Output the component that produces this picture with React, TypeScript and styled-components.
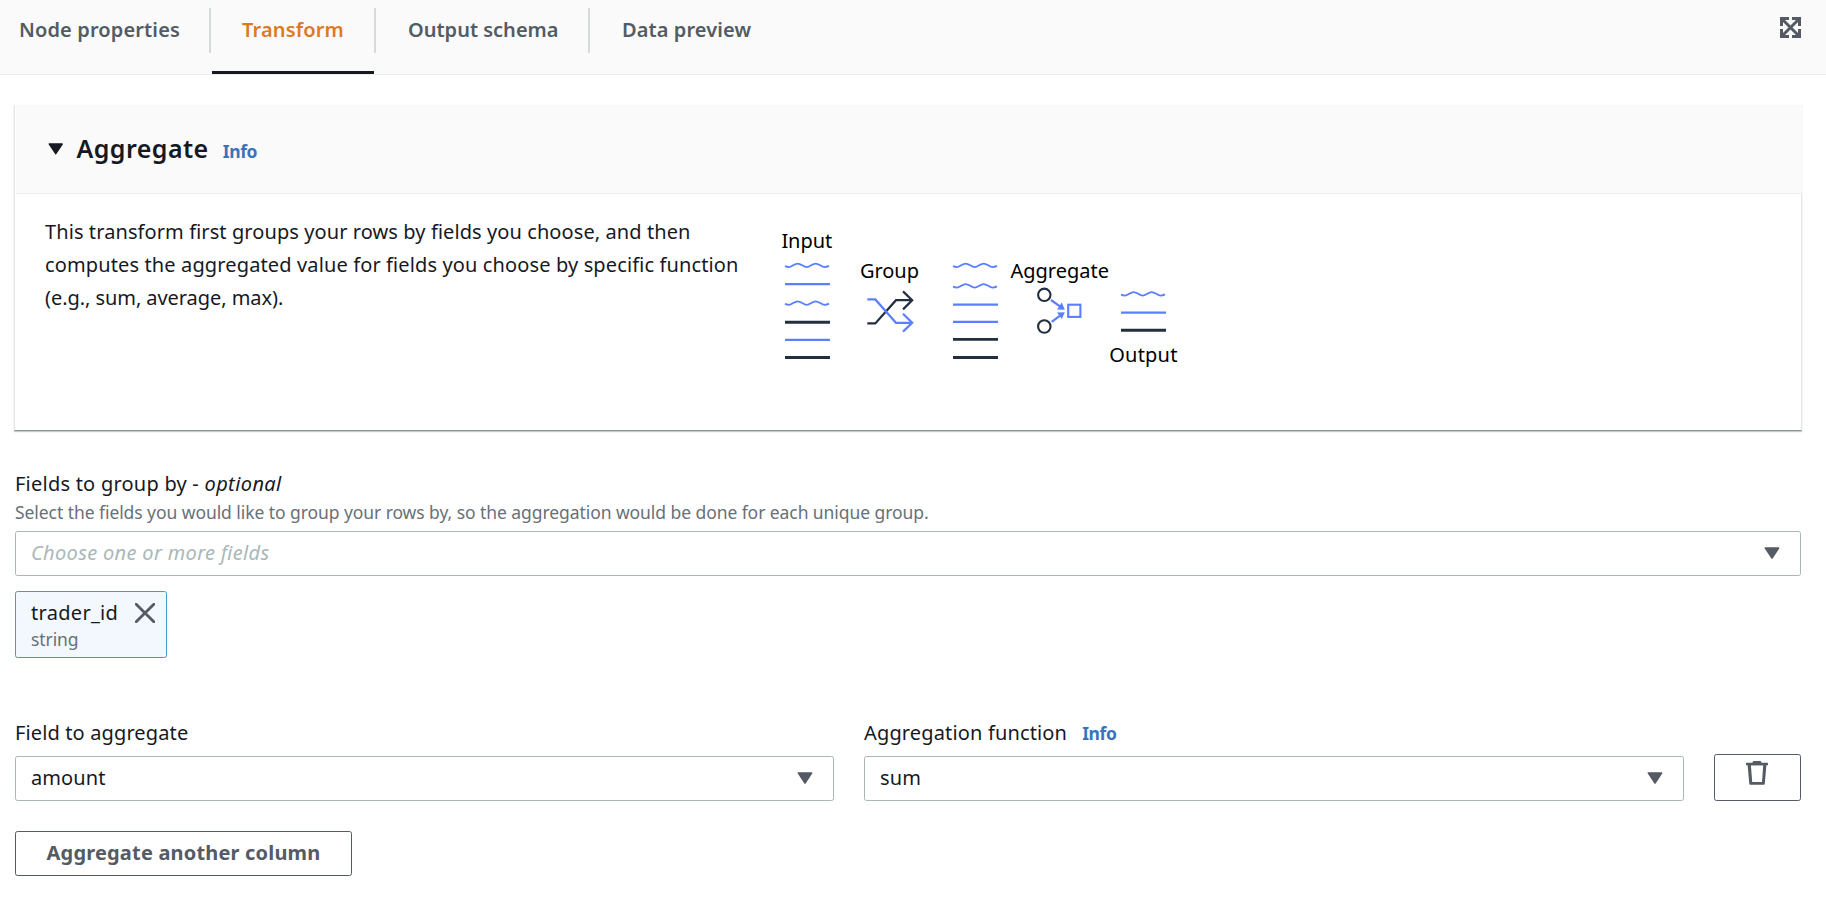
import React from "react";
import styled, { createGlobalStyle } from "styled-components";

const GlobalStyle = createGlobalStyle`
  * { box-sizing: border-box; }
  body {
    margin: 0;
    background: #fff;
    color: #16191f;
    font-family: "Noto Sans", sans-serif;
    font-size: 20px;
    line-height: 30px;
    font-feature-settings: "liga" 1;
  }
`;

const Page = styled.div`
  width: 1826px;
  height: 901px;
  overflow: hidden;
`;

const TabBar = styled.nav`
  display: flex;
  height: 75px;
  padding-left: 1px;
  background: #fafafa;
  border-bottom: 1px solid #eaeded;
`;

const Tab = styled.div<{ $active?: boolean; $width: number; $spacing?: number }>`
  width: ${(p) => p.$width}px;
  padding: 15px 0 0 ${(p) => (p.$active ? 30 : 32)}px;
  margin-left: ${(p) => (p.$active ? 1 : 0)}px;
  border-bottom: 3px solid ${(p) => (p.$active ? "#16191f" : "transparent")};
  color: ${(p) => (p.$active ? "#dd7a1f" : "#545b64")};
  font-weight: 600;
  letter-spacing: ${(p) => p.$spacing ?? 0.1}px;
  white-space: nowrap;
  &:first-child { padding-left: 18px; }
`;

const TabDivider = styled.div`
  width: 2px;
  height: 45px;
  margin-top: 8px;
  background: #d5dbdb;
`;

const ExpandButton = styled.div`
  margin: 17px 25px 0 auto;
  height: 21px;
  line-height: 0;
`;

const Content = styled.main`
  padding: 30px 25px 0 15px;
`;

const Card = styled.section`
  height: 326px;
  margin: 0 -1px 0 -1px;
  border: 1px solid #e3e6e6;
  border-top: 0;
  border-bottom: 1px solid #879596;
  box-shadow: 0 1px 1px rgba(0, 28, 36, 0.22);
`;

const CardHeader = styled.header`
  display: flex;
  align-items: baseline;
  height: 89px;
  margin: 0 -1px 0 1px;
  padding: 27px 0 0 32px;
  background: #fafafa;
  border-bottom: 1px solid #eaeded;
  border-radius: 2px 2px 0 0;
  > svg {
    align-self: flex-start;
    margin-top: 11px;
  }
`;

const Heading = styled.h2`
  margin: 0 14px 0 13px;
  font-size: 25px;
  line-height: 32px;
  font-weight: 600;
  letter-spacing: 0.45px;
`;

const InfoLink = styled.a`
  color: #3b73bb;
  font-size: 17.5px;
  font-weight: 700;
  letter-spacing: -0.35px;
`;

const CardBody = styled.div`
  display: flex;
  padding: 21px 0 0 30px;
`;

const Description = styled.p`
  width: 725px;
  margin: 0;
  line-height: 33px;
`;

const DescriptionLine = styled.span<{ $spacing: number }>`
  display: block;
  letter-spacing: ${(p) => p.$spacing}px;
`;

const Diagram = styled.svg`
  display: block;
  width: 420px;
  height: 160px;
  margin-top: 5px;
  fill: none;
  text { fill: #000; font-size: 20px; }
`;

const Label = styled.div<{ $gap?: number; $spacing?: number }>`
  height: 30px;
  margin-bottom: ${(p) => p.$gap || 0}px;
  padding-top: 1px;
  letter-spacing: ${(p) => p.$spacing ?? 0.23}px;
  white-space: nowrap;
  em { letter-spacing: 0.4px; }
  ${InfoLink} { margin-left: 15px; }
`;

const Field = styled.div<{ $top?: number }>`
  margin-top: ${(p) => p.$top || 0}px;
`;

const Hint = styled.div`
  height: 26px;
  margin: 1px 0 6px;
  color: #687078;
  font-size: 17.5px;
  line-height: 26px;
  letter-spacing: -0.07px;
`;

const SelectBox = styled.div<{ $placeholder?: boolean }>`
  display: flex;
  align-items: center;
  justify-content: space-between;
  height: 45px;
  padding: 0 20px 2px 15px;
  border: 1px solid #aab7b8;
  border-radius: 2.5px;
  color: ${(p) => (p.$placeholder ? "#aab7b8" : "#16191f")};
  font-style: ${(p) => (p.$placeholder ? "italic" : "normal")};
  letter-spacing: ${(p) => (p.$placeholder ? 0.33 : 0.1)}px;
`;

const Token = styled.div`
  display: flex;
  justify-content: space-between;
  width: 152px;
  height: 67px;
  margin-top: 15px;
  padding: 6px 11px 0 15px;
  background: #f2f8fd;
  border: 1px solid #3f9fc9;
  border-radius: 2.5px;
  letter-spacing: 0.3px;
  svg { margin-top: 5px; }
`;

const TokenType = styled.div`
  color: #687078;
  font-size: 17.5px;
  line-height: 22px;
  letter-spacing: -0.1px;
`;

const AggregateRow = styled.div`
  display: grid;
  grid-template-columns: 819px 820px 87px;
  gap: 30px;
  align-items: end;
  margin-top: 59px;
`;

const Button = styled.button<{ $icon?: boolean }>`
  display: flex;
  justify-content: center;
  align-items: ${(p) => (p.$icon ? "flex-start" : "center")};
  width: ${(p) => (p.$icon ? 87 : 337)}px;
  height: ${(p) => (p.$icon ? 47 : 45)}px;
  margin-top: ${(p) => (p.$icon ? 0 : 30)}px;
  padding: ${(p) => (p.$icon ? "5px 1px 0 0" : "0 0 2px")};
  background: #fff;
  border: 1px solid #545b64;
  border-radius: 2.5px;
  color: #545b64;
  font: 700 20px/30px "Noto Sans", sans-serif;
  letter-spacing: 0.18px;
`;

const BLUE = "#5b7fff";
const DARK = "#232f3e";

const Caret = ({ color = "#545b64", size = 16 }: { color?: string; size?: number }) => (
  <svg width={size} height={size * 0.75} viewBox="0 0 16 12">
    <path d="M1.4 1H14.6L8 11Z" fill={color} stroke={color} strokeWidth="1.6" strokeLinejoin="round" />
  </svg>
);

const ExpandIcon = () => (
  <svg width="21" height="21" viewBox="0 0 21 21" fill="#545b64">
    <path d="M0 0H9V3H3V9H0ZM12 0H21V9H18V3H12ZM0 12H3V18H9V21H0ZM18 12H21V21H12V18H18Z" />
    <path d="M2 2L19 19M19 2L2 19" stroke="#545b64" strokeWidth="3" />
  </svg>
);

const CloseIcon = () => (
  <svg width="20" height="20" viewBox="0 0 20 20">
    <path d="M1.2 1.2L18.8 18.8M18.8 1.2L1.2 18.8" stroke="#545b64" strokeWidth="2.8" strokeLinecap="round" />
  </svg>
);

const TrashIcon = () => (
  <svg width="22" height="26" viewBox="0 0 22 26" fill="#545b64">
    <path d="M0.5 2.8H6.3L7.3 1H14.6L15.6 2.8H21.5Q22 2.8 22 3.3V5.2H0V3.3Q0 2.8 0.5 2.8Z" />
    <path fillRule="evenodd" d="M1.6 5H20.4L18.8 23.8Q18.7 24.8 17.8 24.8H4.3Q3.4 24.8 3.3 23.8ZM4.9 5.2L6.2 22H16L17.2 5.2Z" />
  </svg>
);

const Wave = ({ x, y }: { x: number; y: number }) => (
  <path
    transform={`translate(${x} ${y})`}
    d="M0 .7C1.2 1.2 2.2 1.6 3.7 1.6c3.4 0 5.6-3.5 9-3.5s5.6 3.5 9 3.5 5.6-3.5 9-3.5 5.6 3.5 9 3.5c1.6 0 3-.5 4.3-1.2"
    stroke={BLUE}
    strokeWidth="1.8"
  />
);

const Rule = ({ x, y, dark }: { x: number; y: number; dark?: boolean }) => (
  <path d={`M${x} ${y}h45`} stroke={dark ? DARK : BLUE} strokeWidth={dark ? 2.9 : 2.2} />
);

const AggregateDiagram = () => (
  <Diagram viewBox="0 0 420 160">
    <text x="11.4" y="27.8" letterSpacing="-0.05">Input</text>
    <Wave x={15} y={45.5} />
    <Rule x={15} y={64.2} />
    <Wave x={15} y={83.2} />
    <Rule x={15} y={102.3} dark />
    <Rule x={15} y={119.8} />
    <Rule x={15} y={137.5} dark />

    <text x="90" y="57.8" letterSpacing="-0.05">Group</text>
    <g strokeWidth="2.2">
      <path d="M97.3 103.4H105.3L126 80.2H142M133 71.4L142.2 80.2L133 89.4" stroke={DARK} />
      <path d="M97.3 79.4H105.3L126 102.8H142M133 93.8L142.2 102.8L133 111.6" stroke={BLUE} />
    </g>

    <Wave x={183} y={45.5} />
    <Wave x={183} y={66} />
    <Rule x={183} y={84.6} />
    <Rule x={183} y={101.8} />
    <Rule x={183} y={119.4} dark />
    <Rule x={183} y={137.5} dark />

    <text x="240.4" y="57.8">Aggregate</text>
    <circle cx="274.3" cy="74.8" r="6.2" stroke={DARK} strokeWidth="2.1" />
    <circle cx="274.3" cy="106.5" r="6.2" stroke={DARK} strokeWidth="2.1" />
    <path d="M280.9 80L290 86.3M281.7 101.8L290 95.6" stroke={BLUE} strokeWidth="2.2" />
    <path d="M294.8 89.7L287 89.5L291.8 82.6ZM294.8 92.3L287 92.5L291.8 99Z" fill={BLUE} />
    <rect x="298.2" y="84.7" width="12.2" height="12.2" stroke={BLUE} strokeWidth="2.1" />

    <Wave x={351} y={74} />
    <Rule x={351} y={92.6} />
    <Rule x={351} y={110.2} dark />
    <text x="339.3" y="141.5" letterSpacing="0.2">Output</text>
  </Diagram>
);

export default function App() {
  return (
    <Page>
      <GlobalStyle />
      <TabBar>
        <Tab $width={208} $spacing={0.13}>Node properties</Tab>
        <TabDivider />
        <Tab $active $width={162} $spacing={0.15}>Transform</Tab>
        <TabDivider />
        <Tab $width={212} $spacing={0}>Output schema</Tab>
        <TabDivider />
        <Tab $width={200}>Data preview</Tab>
        <ExpandButton><ExpandIcon /></ExpandButton>
      </TabBar>
      <Content>
        <Card>
          <CardHeader>
            <Caret color="#16191f" size={15.5} />
            <Heading>Aggregate</Heading>
            <InfoLink>Info</InfoLink>
          </CardHeader>
          <CardBody>
            <Description>
              <DescriptionLine $spacing={0.09}>
                This transform first groups your rows by fields you choose, and then
              </DescriptionLine>
              <DescriptionLine $spacing={0.13}>
                computes the aggregated value for fields you choose by specific function
              </DescriptionLine>
              <DescriptionLine $spacing={-0.06}>(e.g., sum, average, max).</DescriptionLine>
            </Description>
            <AggregateDiagram />
          </CardBody>
        </Card>
        <Field $top={37}>
          <Label>Fields to group by - <em>optional</em></Label>
          <Hint>
            Select the fields you would like to group your rows by, so the aggregation would be done for each unique group.
          </Hint>
          <SelectBox $placeholder>Choose one or more fields<Caret /></SelectBox>
          <Token>
            <div>
              trader_id
              <TokenType>string</TokenType>
            </div>
            <CloseIcon />
          </Token>
        </Field>
        <AggregateRow>
          <Field>
            <Label $gap={9} $spacing={0.13}>Field to aggregate</Label>
            <SelectBox>amount<Caret /></SelectBox>
          </Field>
          <Field>
            <Label $gap={9} $spacing={0.15}>Aggregation function<InfoLink>Info</InfoLink></Label>
            <SelectBox>sum<Caret /></SelectBox>
          </Field>
          <Button $icon aria-label="Remove"><TrashIcon /></Button>
        </AggregateRow>
        <Button>Aggregate another column</Button>
      </Content>
    </Page>
  );
}
